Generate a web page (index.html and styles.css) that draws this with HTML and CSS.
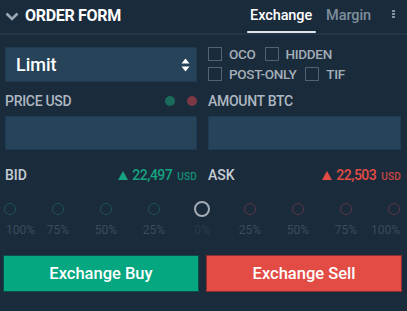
FILE: index.html
```html
<!DOCTYPE html>
<html>
<head>
<meta charset="utf-8">
<link rel="stylesheet" href="styles.css">
</head>
<body>
<div class="panel">
  <header class="head">
    <div class="title">
      <svg class="chev" width="14" height="9" viewBox="0 0 14 9"><path d="M1.5 1.5 L7 7 L12.5 1.5" fill="none" stroke="#9aa7b4" stroke-width="2.6"/></svg>
      <span>ORDER FORM</span>
    </div>
    <nav class="tabs">
      <span class="tab active">Exchange</span>
      <span class="tab">Margin</span>
      <span class="more"><i></i><i></i><i></i></span>
    </nav>
  </header>

  <div class="grid">
    <div class="select">
      <span>Limit</span>
      <svg width="9" height="14" viewBox="0 0 9 14"><path d="M4.5 0.5 L8.5 5.5 H0.5 Z M4.5 13.5 L8.5 8.5 H0.5 Z" fill="#fff"/></svg>
    </div>
    <div class="checks">
      <div class="crow">
        <label class="cb"><span class="box"></span>OCO</label>
        <label class="cb"><span class="box"></span>HIDDEN</label>
      </div>
      <div class="crow">
        <label class="cb"><span class="box"></span>POST-ONLY</label>
        <label class="cb"><span class="box"></span>TIF</label>
      </div>
    </div>

    <div class="field">
      <div class="lbl"><span>PRICE USD</span><span class="dots"><i class="g"></i><i class="r"></i></span></div>
      <div class="input"></div>
    </div>
    <div class="field">
      <div class="lbl"><span>AMOUNT BTC</span></div>
      <div class="input"></div>
    </div>

    <div class="quote">
      <span class="qname">BID</span>
      <span class="qval buy"><span class="tri"></span>22,497 <small>USD</small></span>
    </div>
    <div class="quote">
      <span class="qname">ASK</span>
      <span class="qval sell"><span class="tri"></span>22,503 <small>USD</small></span>
    </div>
  </div>

  <div class="slider">
    <div class="stop first g"><i></i><em>100%</em></div>
    <div class="stop g"><i></i><em>75%</em></div>
    <div class="stop g"><i></i><em>50%</em></div>
    <div class="stop g"><i></i><em>25%</em></div>
    <div class="stop mid"><i></i><em>0%</em></div>
    <div class="stop r"><i></i><em>25%</em></div>
    <div class="stop r"><i></i><em>50%</em></div>
    <div class="stop r"><i></i><em>75%</em></div>
    <div class="stop last r"><i></i><em>100%</em></div>
  </div>

  <div class="actions">
    <button class="btn buyb">Exchange Buy</button>
    <button class="btn sellb">Exchange Sell</button>
  </div>
</div>
</body>
</html>
```
FILE: styles.css
```css
* { box-sizing: border-box; }
html, body { margin: 0; padding: 0; }
body {
  background: #1a2b3c;
  font-family: Roboto, "Liberation Sans", Arial, sans-serif;
  color: #fff;
  width: 407px;
  height: 311px;
  overflow: hidden;
}
.panel { width: 407px; }

.head {
  height: 35px;
  display: flex;
  align-items: center;
  justify-content: space-between;
  border-bottom: 2px solid #223549;
  padding: 0 0 2px 5px;
}
.title {
  display: flex;
  align-items: center;
  font-weight: 700;
  font-size: 16px;
  letter-spacing: -0.3px;
  color: #fff;
}
.chev { margin-right: 6px; margin-top: 1px; }

.tabs {
  display: flex;
  align-items: stretch;
  height: 33px;
}
.tab {
  display: flex;
  align-items: center;
  font-size: 14.5px;
  font-weight: 500;
  color: #7f8e9d;
  padding: 0 4px 0 3px;
  margin-right: 7px;
  position: relative;
  letter-spacing: -0.1px;
}
.tab.active { color: #fff; }
.tab.active::after {
  content: "";
  position: absolute;
  left: 0; right: 0; bottom: -1px;
  height: 2px;
  background: #e2e5e8;
  border-radius: 1px;
}
.more {
  display: flex;
  flex-direction: column;
  justify-content: center;
  gap: 1px;
  margin: 0 12px 4px 10px;
}
.more i { display: block; width: 3px; height: 2px; background: #8593a0; }

.grid {
  display: grid;
  grid-template-columns: 192px 193px;
  column-gap: 11px;
  padding: 0 6px 0 5px;
}
.select {
  margin-top: 12px;
  height: 35px;
  background: #264359;
  border: 1px solid #1e3950;
  display: flex;
  align-items: center;
  justify-content: space-between;
  padding: 0 6px 0 10px;
  font-size: 18px;
  font-weight: 500;
}
.checks { margin-top: 12px; }
.crow { display: flex; gap: 9px; }
.crow + .crow { margin-top: 6px; }
.cb {
  display: flex;
  align-items: center;
  font-size: 13.5px;
  font-weight: 500;
  color: #a4aeb8;
  height: 14px;
  letter-spacing: -0.3px;
}
.box {
  width: 14px; height: 14px;
  border: 1px solid #56626f;
  margin-right: 7px;
}

.field { margin-top: 11px; }
.lbl {
  display: flex;
  justify-content: space-between;
  align-items: center;
  height: 16px;
  font-size: 14px;
  font-weight: 500;
  color: #aeb7c1;
  letter-spacing: -0.3px;
}
.dots { display: flex; gap: 12px; margin-right: 0; }
.dots i { display: block; width: 10px; height: 10px; border-radius: 50%; }
.dots .g { background: #1a6b59; }
.dots .r { background: #7b3943; }
.input {
  margin-top: 7px;
  height: 34px;
  background: #264359;
  border: 1px solid #1e3b55;
}

.quote {
  margin-top: 17px;
  display: flex;
  justify-content: space-between;
  align-items: baseline;
  height: 16px;
}
.qname { font-size: 14px; font-weight: 500; color: #c6cdd4; }
.qval {
  font-size: 14px;
  font-weight: 500;
  letter-spacing: -0.5px;
  display: flex;
  align-items: baseline;
}
.qval small { font-size: 10px; margin-left: 5px; opacity: 0.85; letter-spacing: 0.2px; }
.tri {
  display: inline-block;
  width: 0; height: 0;
  border-left: 5.5px solid transparent;
  border-right: 5.5px solid transparent;
  margin-right: 4px;
}
.buy { color: #16a37f; }
.buy .tri { border-bottom: 9px solid #16a37f; }
.sell { color: #e44b45; }
.sell .tri { border-bottom: 9px solid #e44b45; }

.slider {
  width: 396px;
  margin: 20px 0 0 4px;
  display: flex;
  justify-content: space-between;
}
.stop {
  width: 12px;
  display: flex;
  flex-direction: column;
  align-items: center;
}
.stop i {
  display: block;
  width: 12px; height: 12px;
  border-radius: 50%;
  border: 1.5px solid #1f5551;
}
.stop.r i { border-color: #5f3443; }
.stop.mid i {
  width: 16px; height: 16px;
  margin-top: -2px;
  margin-bottom: -2px;
  border: 2px solid #a3abb3;
}
.stop em {
  font-style: normal;
  font-size: 12px;
  color: #3b4c5d;
  margin-top: 8px;
  white-space: nowrap;
}
.stop.mid em { color: #2a3b4c; }
.stop.first { align-items: flex-start; }
.stop.first em { margin-left: 2px; }
.stop.last { align-items: flex-end; }

.actions {
  display: flex;
  justify-content: space-between;
  padding: 0 5px 0 3px;
  margin-top: 18px;
}
.btn {
  width: 196px;
  height: 37px;
  font-family: Roboto, "Liberation Sans", Arial, sans-serif;
  font-size: 16.5px;
  font-weight: 500;
  color: #fff;
  border: 1px solid #0e4f4a;
  padding: 0;
}
.buyb { background: #04a77f; }
.sellb { background: #e34c45; border-color: #8c2f33; }
```
